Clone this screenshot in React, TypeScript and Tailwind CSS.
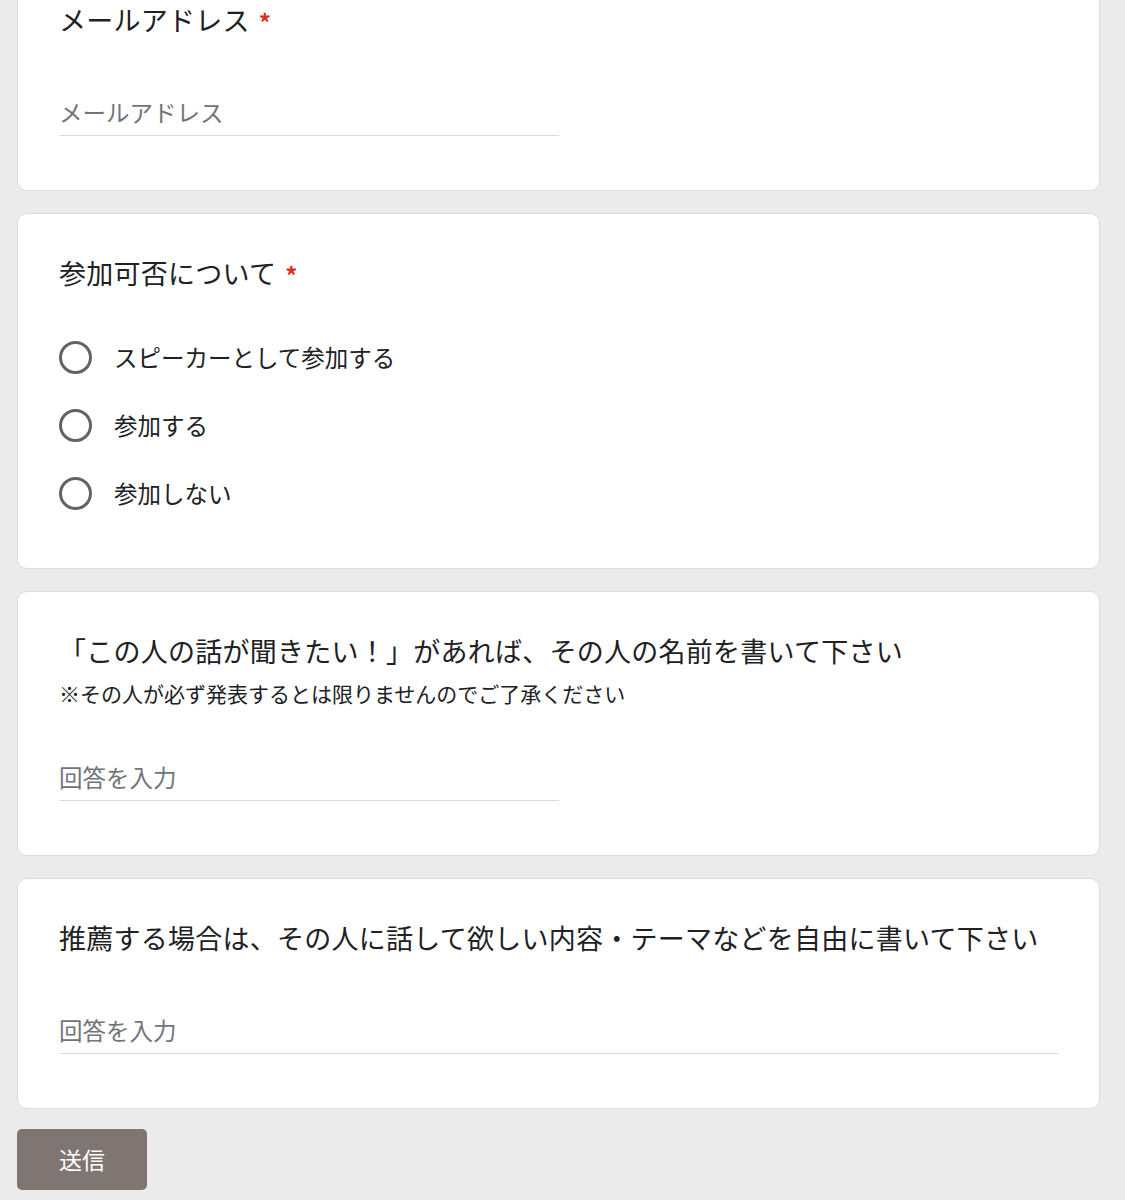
import React from "react";

const font = {
  fontFamily: '"Noto Sans CJK JP", "Noto Sans", Roboto, sans-serif',
};

type CardProps = {
  title: string;
  required?: boolean;
  note?: string;
  children: React.ReactNode;
};

function Card({ title, required, note, children }: CardProps) {
  return (
    <section className="rounded-[10px] border border-[#dadce0] bg-white px-[41px] pt-[41px] pb-[41px]">
      <h2 className="flex h-[36px] items-start text-[27px] leading-[36px] font-normal tracking-[0.25px] text-[#202124]">
        <span>{title}</span>
        {required && (
          <span className="ml-[9px] h-[36px] pt-[2px] text-[24px] leading-[36px] font-bold text-[#d93025]">
            *
          </span>
        )}
      </h2>
      {note && (
        <p className="mt-[10px] text-[21px] leading-[28px] text-[#202124]">
          {note}
        </p>
      )}
      {children}
    </section>
  );
}

function TextField({
  placeholder,
  wide,
  top,
}: {
  placeholder: string;
  wide?: boolean;
  top: string;
}) {
  return (
    <div className={`${top} mb-[13px] ${wide ? "w-full" : "w-[500px]"}`}>
      <input
        type="text"
        placeholder={placeholder}
        className="block h-[40px] w-full border-b border-[#dadce0] bg-transparent pb-[7px] text-[23.5px] leading-[32px] text-[#202124] outline-none placeholder:text-[#70757a]"
      />
    </div>
  );
}

const options = ["スピーカーとして参加する", "参加する", "参加しない"];

function RadioGroup() {
  return (
    <div className="mt-[32px] flex flex-col">
      {options.map((label) => (
        <label key={label} className="flex h-[68px] items-center gap-[22px]">
          <span className="h-[33px] w-[33px] shrink-0 rounded-full border-[3px] border-[#5f6368]" />
          <span className="text-[23.5px] leading-[32px] text-[#202124]">
            {label}
          </span>
        </label>
      ))}
    </div>
  );
}

export default function App() {
  return (
    <div className="h-[1200px] overflow-hidden bg-[#ebebeb]" style={font}>
      <div className="-mt-[40px] flex flex-col gap-[22px] pr-[25px] pl-[17px]">
        <Card title="メールアドレス" required>
          <TextField placeholder="メールアドレス" top="mt-[58px]" />
        </Card>

        <Card title="参加可否について" required>
          <RadioGroup />
        </Card>

        <Card
          title="「この人の話が聞きたい！」があれば、その人の名前を書いて下さい"
          note="※その人が必ず発表するとは限りませんのでご了承ください"
        >
          <TextField placeholder="回答を入力" top="mt-[54px]" />
        </Card>

        <Card title="推薦する場合は、その人に話して欲しい内容・テーマなどを自由に書いて下さい">
          <TextField placeholder="回答を入力" wide top="mt-[58px]" />
        </Card>

        <div className="-mt-[2px] flex">
          <button
            type="button"
            className="h-[61px] w-[130px] rounded-[5px] bg-[#7f7572] text-[23px] text-white"
          >
            送信
          </button>
        </div>
      </div>
    </div>
  );
}
